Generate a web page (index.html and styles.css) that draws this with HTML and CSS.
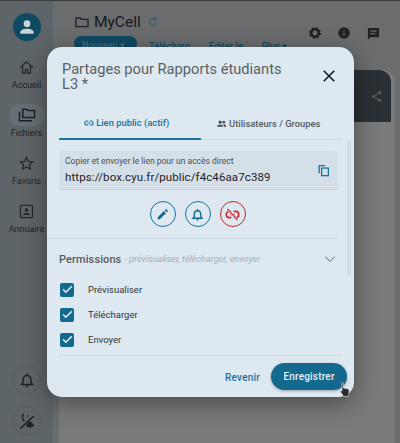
FILE: index.html
```html
<!DOCTYPE html>
<html lang="fr">
<head>
<meta charset="utf-8">
<title>Partages</title>
<link rel="stylesheet" href="styles.css">
</head>
<body>
<div class="app">
  <aside class="sidebar">
    <div class="avatar"><svg viewBox="0 0 24 24" width="20" height="20"><path fill="#c9d3d8" d="M12 4a4 4 0 1 1 0 8 4 4 0 0 1 0-8zm0 10c4.400 0 8 1.800 8 4v2H4v-2c0-2.200 3.600-4 8-4z"/></svg></div>
    <nav class="nav">
      <div class="nav-item"><span class="nav-icon"><svg viewBox="0 0 24 24" width="17" height="17"><path fill="none" stroke="#24282a" stroke-width="1.800" d="M12 4l8 7h-2.500v9h-4v-5.500h-3V20h-4v-9H4z"/></svg></span><span>Accueil</span></div>
      <div class="nav-item"><span class="nav-icon active"><svg viewBox="0 0 24 24" width="20" height="20"><path fill="none" stroke="#1d2123" stroke-width="1.800" d="M3 8v11h15M7 5h4l1.500 1.500H21V15H7z"/></svg></span><span>Fichiers</span></div>
      <div class="nav-item"><span class="nav-icon"><svg viewBox="0 0 24 24" width="17" height="17"><path fill="none" stroke="#24282a" stroke-width="1.800" d="M12 3.500l2.600 5.600 6 .7-4.500 4.100 1.200 6L12 17l-5.300 2.900 1.200-6-4.500-4.100 6-.7z"/></svg></span><span>Favoris</span></div>
      <div class="nav-item"><span class="nav-icon"><svg viewBox="0 0 24 24" width="17" height="17"><rect x="3.500" y="3.500" width="17" height="17" rx="1.500" fill="none" stroke="#24282a" stroke-width="1.800"/><circle cx="12" cy="10" r="2.500" fill="#24282a"/><path fill="#24282a" d="M7 17c0-2 2.500-3 5-3s5 1 5 3z"/></svg></span><span>Annuaire</span></div>
    </nav>
    <div class="side-bottom">
      <span class="round-ghost"><svg viewBox="0 0 24 24" width="18" height="18"><path fill="none" stroke="#1d2123" stroke-width="2" d="M5 18c1.500-1.500 2-3 2-7a5 5 0 0 1 10 0c0 4 .5 5.500 2 7z"/><path fill="#1d2123" d="M10 19.500h4a2 2 0 0 1-4 0zM11 3h2v2h-2z"/></svg></span>
      <span class="round-ghost"><svg viewBox="0 0 24 24" width="20" height="20"><path stroke="#1d2123" stroke-width="2" fill="none" d="M4 21L20 6"/><path fill="#1d2123" d="M15 12l5 4v3h-3l-1 2-2-2-2 1-1-3z"/><path fill="none" stroke="#1d2123" stroke-width="1.800" d="M8 3.500a5.500 5.500 0 0 0 1 8.500"/><circle cx="13" cy="6" r="1" fill="#1d2123"/></svg></span>
    </div>
  </aside>
  <main class="main">
    <header class="head">
      <div class="title-row">
        <svg viewBox="0 0 24 24" width="16" height="16"><path fill="none" stroke="#1f2326" stroke-width="2" d="M3 6h6.500l2 2H21v11H3z"/></svg>
        <span class="title">MyCell</span>
        <svg viewBox="0 0 24 24" width="12" height="12"><path fill="none" stroke="#3d5a68" stroke-width="2.200" d="M19 12a7 7 0 1 1-2-5M18 3v5h-5"/></svg>
        <span class="head-icons">
          <svg viewBox="0 0 24 24" width="14" height="14"><circle cx="12" cy="12" r="6.500" fill="none" stroke="#1f2326" stroke-width="4.500"/><circle cx="12" cy="12" r="9" fill="none" stroke="#1f2326" stroke-width="2.500" stroke-dasharray="3.500 3.570"/></svg>
          <svg viewBox="0 0 24 24" width="14" height="14"><circle cx="12" cy="12" r="10" fill="#1f2326"/><rect x="11" y="11" width="2" height="6" fill="#6b6c6d"/><rect x="11" y="7" width="2" height="2" fill="#6b6c6d"/></svg>
          <svg viewBox="0 0 24 24" width="15" height="15"><path fill="#1f2326" d="M3 3h18v15H7l-4 4z"/><path stroke="#6b6c6d" stroke-width="2" d="M7 8h10M7 12h8"/></svg>
        </span>
      </div>
      <div class="actions">
        <span class="btn-new">Nouveau ▾</span>
        <span class="act act-a">Télécharg</span>
        <span class="act act-b">Editer le</span>
        <span class="act act-c">Plus ▾</span>
      </div>
    </header>
    <div class="panel"><div class="panel-dark"><svg viewBox="0 0 24 24" width="13" height="13"><circle cx="18" cy="5" r="2.500" fill="#5f6669"/><circle cx="6" cy="12" r="2.500" fill="#5f6669"/><circle cx="18" cy="19" r="2.500" fill="#5f6669"/><path stroke="#5f6669" stroke-width="1.800" d="M18 5L6 12l12 7" fill="none"/></svg></div></div>
  </main>
</div>

<section class="modal">
  <div class="modal-head">
    <h1>Partages pour Rapports étudiants L3 *</h1>
    <svg class="close" viewBox="0 0 24 24" width="18" height="18"><path stroke="#1b2023" stroke-width="2.200" d="M5 5l14 14M19 5L5 19"/></svg>
  </div>
  <div class="tabs">
    <div class="tab tab-on"><svg viewBox="0 0 24 24" width="10" height="10"><path fill="none" stroke="#1a749c" stroke-width="2.500" d="M10 7H7a5 5 0 0 0 0 10h3M14 7h3a5 5 0 0 1 0 10h-3M8 12h8"/></svg>Lien public (actif)</div>
    <div class="tab tab-off"><svg viewBox="0 0 24 24" width="11" height="11"><circle cx="9" cy="9" r="3.500" fill="#4b5054"/><circle cx="17" cy="9" r="3" fill="#4b5054"/><path fill="#4b5054" d="M2 19c0-3 3-5 7-5s7 2 7 5zM17.500 19c0-2-.5-3.500-2-5 3.500-.5 7 1 7 5z"/></svg>Utilisateurs / Groupes</div>
  </div>
  <div class="body">
    <div class="link-box">
      <div class="link-text">
        <div class="link-label">Copier et envoyer le lien pour un accès direct</div>
        <div class="link-url">https://box.cyu.fr/public/f4c46aa7c389</div>
      </div>
      <svg class="copy" viewBox="0 0 24 24" width="13" height="13"><path fill="none" stroke="#1a749c" stroke-width="2.400" d="M4 17V3h11"/><rect x="8.500" y="7.500" width="12.500" height="14" fill="none" stroke="#1a749c" stroke-width="2.400"/></svg>
    </div>
    <div class="round-row">
      <span class="round"><svg viewBox="0 0 24 24" width="14" height="14"><path fill="#14698f" d="M3 17.500V21h3.500L17 10.500 13.500 7zM20 7.500a1 1 0 0 0 0-1.400l-2.100-2.100a1 1 0 0 0-1.400 0L15 5.500 18.500 9z"/></svg></span>
      <span class="round"><svg viewBox="0 0 24 24" width="15" height="15"><path fill="none" stroke="#14698f" stroke-width="2.200" d="M5 18c1.500-1.500 2-3 2-7a5 5 0 0 1 10 0c0 4 .5 5.500 2 7z"/><path fill="#14698f" d="M10 19.500h4a2 2 0 0 1-4 0zM11 3h2v2h-2z"/></svg></span>
      <span class="round round-red"><svg viewBox="0 0 24 24" width="15" height="15"><path fill="none" stroke="#bf2b32" stroke-width="2.600" d="M10 7H7a5 5 0 0 0 0 10h3M14 7h3a5 5 0 0 1 0 10h-3M8 12h8"/><path stroke="#dde8f0" stroke-width="4.500" d="M4 3l16 18"/><path stroke="#bf2b32" stroke-width="2" d="M4 3l16 18"/></svg></span>
    </div>
    <div class="perm">
      <div class="perm-head">
        <span class="perm-title">Permissions</span>
        <span class="perm-sub">- prévisualiser, télécharger, envoyer</span>
        <svg class="chev" viewBox="0 0 24 24" width="14" height="14"><path fill="none" stroke="#8b979e" stroke-width="2.200" d="M4 8l8 8 8-8"/></svg>
      </div>
      <div class="checks">
        <label class="check"><span class="box"><svg viewBox="0 0 24 24" width="13" height="13"><path fill="none" stroke="#e6eff4" stroke-width="3" d="M4 12l5 5L20 6"/></svg></span>Prévisualiser</label>
        <label class="check"><span class="box"><svg viewBox="0 0 24 24" width="13" height="13"><path fill="none" stroke="#e6eff4" stroke-width="3" d="M4 12l5 5L20 6"/></svg></span>Télécharger</label>
        <label class="check"><span class="box"><svg viewBox="0 0 24 24" width="13" height="13"><path fill="none" stroke="#e6eff4" stroke-width="3" d="M4 12l5 5L20 6"/></svg></span>Envoyer</label>
      </div>
    </div>
    <span class="scroll"></span>
  </div>
  <div class="foot">
    <span class="back">Revenir</span>
    <span class="save">Enregistrer</span>
  </div>
</section>
<svg class="cursor" viewBox="0 0 16 20" width="13" height="17"><path fill="#2b2b2b" stroke="#e8e8e8" stroke-width=".8" d="M4 1.500c.8 0 1.300.5 1.300 1.300V8l5 1c1.500.3 2.200 1 2.200 2.500l-.4 4.500-1 2.500H5.500L2 13c-.6-.9 0-1.800 1-1.500l.7.500V2.800C2.700 2 3.200 1.500 4 1.500z"/></svg>
</body>
</html>
```
FILE: styles.css
```css
* { box-sizing: border-box; }
html, body { margin: 0; width: 400px; height: 443px; overflow: hidden; }
body { font-family: Roboto, "Liberation Sans", sans-serif; background: #6f7071; position: relative; }
.app { display: flex; height: 443px; border-top: 1px solid #3a3c3d; }
.sidebar { width: 53px; background: #5e6568; display: flex; flex-direction: column; align-items: center; padding-top: 12px; flex: none; }
.avatar { width: 28px; height: 28px; border-radius: 50%; background: #0f4a63; display: flex; align-items: center; justify-content: center; }
.nav { display: flex; flex-direction: column; margin-top: 15px; }
.nav-item { display: flex; flex-direction: column; align-items: center; font-size: 9px; color: #1f2326; height: 48px; line-height: 11px; gap: 2px; }
.nav-icon { width: 36px; height: 22px; display: flex; align-items: center; justify-content: center; border-radius: 11px; }
.nav-icon.active { background: #656f75; }
.side-bottom { margin-top: auto; display: flex; flex-direction: column; gap: 12px; padding-bottom: 8px; }
.round-ghost { width: 29px; height: 29px; border-radius: 50%; border: 1px solid #565c5f; display: flex; align-items: center; justify-content: center; }
.main { flex: 1; display: flex; flex-direction: column; min-width: 0; background: #6b6c6d; }
.head { padding: 10px 19px 0 21px; }
.title-row { display: flex; align-items: center; gap: 4px; height: 22px; }
.title { font-size: 15.500px; color: #16191b; margin-right: 2px; }
.head-icons { margin-left: auto; display: flex; gap: 15px; padding-top: 22px; align-items: center; }
.actions { display: flex; align-items: center; font-size: 9.300px; color: #0f4a63; gap: 19px; font-weight: 500; height: 15px; margin-top: 3px; padding-top: 4px; }
.btn-new { background: #0f4a63; color: #4a6e80; padding: 2px 8px 0; height: 15px; line-height: 15px; border-radius: 8px; width: 63px; white-space: nowrap; margin-right: -7px; font-size: 9px; position: relative; top: -2px; }
.panel { flex: 1; margin: 19px 5px 0 6px; background: #7a7a7a; border-radius: 12px 12px 0 0; overflow: hidden; }
.panel-dark { height: 52px; margin-right: 4px; background: #2a3034; border-radius: 0 12px 0 0; display: flex; justify-content: flex-end; align-items: center; padding-right: 8px; }
.modal { position: absolute; left: 47px; top: 47px; width: 307px; height: 350px; background: #dde8f0; border-radius: 15px; box-shadow: 0 6px 24px rgba(0,0,0,.4); display: flex; flex-direction: column; }
.modal-head { display: flex; padding: 15px 16px 0 15px; height: 64px; justify-content: space-between; }
.modal-head h1 { margin: 0; font-weight: 400; font-size: 14.650px; line-height: 15px; color: #5a5f63; width: 235px; }
.close { margin-top: 5px; }
.tabs { display: flex; margin: 0 12px; border-bottom: 1px solid #c9d8e1; height: 29px; }
.tab { flex: 1; display: flex; justify-content: center; align-items: center; gap: 2px; font-size: 9.400px; font-weight: 500; color: #575c60; padding: 1px 0 5px; }
.tab-on { color: #1a749c; border-bottom: 2px solid #1a749c; margin-bottom: -1px; padding-right: 6px; }
.tab-off { padding-right: 6px; }
.body { position: relative; flex: 1; min-height: 0; padding: 11px 0 0; }
.link-box { margin: 0 16px 0 12px; height: 39px; background: #d5dfe8; border-radius: 4px 4px 0 0; border-bottom: 1px solid #c8d4dd; display: flex; align-items: center; justify-content: space-between; padding: 0 8px 0 6px; }
.link-label { font-size: 8.500px; color: #4b5054; line-height: 11px; }
.link-url { font-size: 11.500px; color: #1f2326; line-height: 16px; margin-top: 2px; letter-spacing: .1px; white-space: nowrap; }
.round-row { display: flex; justify-content: center; gap: 9px; padding-top: 11px; height: 48px; padding-right: 6px; }
.round { width: 26px; height: 26px; border-radius: 50%; border: 1px solid #1a749c; display: flex; align-items: center; justify-content: center; }
.round-red { border-color: #bf2b32; }
.perm { margin: 0 16px 0 0; border-top: 1px solid #ccd9e2; padding: 0 0 0 12px; }
.perm-head { display: flex; align-items: center; height: 40px; gap: 3px; }
.perm-title { font-size: 11px; font-weight: 500; color: #565b5f; letter-spacing: .1px; }
.perm-sub { font-size: 9.100px; font-style: italic; color: #a6b0b7; }
.chev { margin-left: auto; margin-right: 1px; }
.checks { margin-top: -2px; }
.check { display: flex; align-items: center; height: 25px; font-size: 9.500px; color: #33373a; }
.box { width: 14px; height: 14px; background: #14698f; border-radius: 2px; margin: 0 14px 0 1px; display: flex; align-items: center; justify-content: center; }
.scroll { position: absolute; right: 3px; top: 0; width: 4px; height: 136px; background: #d0dbe3; }
.foot { display: flex; justify-content: flex-end; align-items: center; gap: 11px; height: 42px; margin: 0 12px; border-top: 1px solid #ccd9e2; }
.back { font-size: 10px; font-weight: 500; color: #1a749c; letter-spacing: .2px; position: relative; top: 1px; }
.save { width: 76px; height: 27px; border-radius: 14px; background: #14698f; color: #e6eff4; font-size: 10px; font-weight: 500; display: flex; align-items: center; justify-content: center; letter-spacing: .2px; box-shadow: 0 1px 3px rgba(0,0,0,.3); margin-right: -5px; }
.cursor { position: absolute; left: 339px; top: 381px; }
```
